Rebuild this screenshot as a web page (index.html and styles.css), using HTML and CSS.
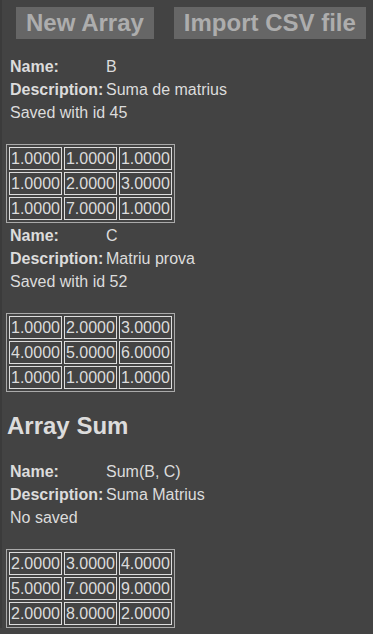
FILE: index.html
```html
<!DOCTYPE html>
<html lang="en">
  <head>
    <meta charset="UTF-8" />
    <meta name="viewport" content="width=device-width, initial-scale=1.0" />
    <title>Arrays</title>
    <link rel="stylesheet" href="styles.css">
  </head>
  <body>
    <div class="toolbar">
      <button class="tool-btn">New Array</button>
      <button class="tool-btn">Import CSV file</button>
    </div>

    <!-- Array B -->
    <div class="array first">
      <div class="info">
        <span class="label">Name:</span><span>B</span>
        <span class="label">Description:</span><span>Suma de matrius</span>
      </div>
      <div class="status">Saved with id 45</div>
      <table class="matrix">
        <tr><td>1.0000</td><td>1.0000</td><td>1.0000</td></tr>
        <tr><td>1.0000</td><td>2.0000</td><td>3.0000</td></tr>
        <tr><td>1.0000</td><td>7.0000</td><td>1.0000</td></tr>
      </table>
    </div>

    <!-- Array C -->
    <div class="array">
      <div class="info">
        <span class="label">Name:</span><span>C</span>
        <span class="label">Description:</span><span>Matriu prova</span>
      </div>
      <div class="status">Saved with id 52</div>
      <table class="matrix">
        <tr><td>1.0000</td><td>2.0000</td><td>3.0000</td></tr>
        <tr><td>4.0000</td><td>5.0000</td><td>6.0000</td></tr>
        <tr><td>1.0000</td><td>1.0000</td><td>1.0000</td></tr>
      </table>
    </div>

    <h2 class="section-title">Array Sum</h2>

    <div class="array result">
      <div class="info">
        <span class="label">Name:</span><span>Sum(B, C)</span>
        <span class="label">Description:</span><span>Suma Matrius</span>
      </div>
      <div class="status">No saved</div>
      <table class="matrix">
        <tr><td>2.0000</td><td>3.0000</td><td>4.0000</td></tr>
        <tr><td>5.0000</td><td>7.0000</td><td>9.0000</td></tr>
        <tr><td>2.0000</td><td>8.0000</td><td>2.0000</td></tr>
      </table>
    </div>
  </body>
</html>
```

FILE: styles.css
```css
body {
  background-color: #434343;
  color: #dcdcdc;
  font-family: "Liberation Sans", Arial, sans-serif;
  font-size: 16px;
  margin: 0;
  padding: 0 0 0 4px;
  border-left: 2px solid #3b3b3b;
}

.toolbar {
  display: flex;
  gap: 20px;
  padding: 7px 0 0 10px;
}

.tool-btn {
  background-color: #666;
  color: #adadad;
  font-family: inherit;
  font-size: 24px;
  font-weight: bold;
  line-height: 28px;
  border: none;
  padding: 2px 10px;
  cursor: pointer;
}

.array {
  margin-top: 1px;
}
.array.first {
  margin-top: 16px;
}
.array.result {
  margin-top: 20px;
}

.info {
  display: grid;
  grid-template-columns: 96px auto;
  line-height: 23px;
  padding-left: 4px;
}
.label {
  font-weight: bold;
}
.status {
  line-height: 23px;
  padding-left: 4px;
}

.matrix {
  margin-top: 20px;
  border: 1px solid #aaa;
  border-spacing: 2px;
}
.matrix td {
  border: 1px solid #ddd;
  padding: 1px;
  line-height: 19px;
}

.section-title {
  font-size: 24px;
  line-height: 28px;
  margin: 20px 0 0 1px;
}
```
